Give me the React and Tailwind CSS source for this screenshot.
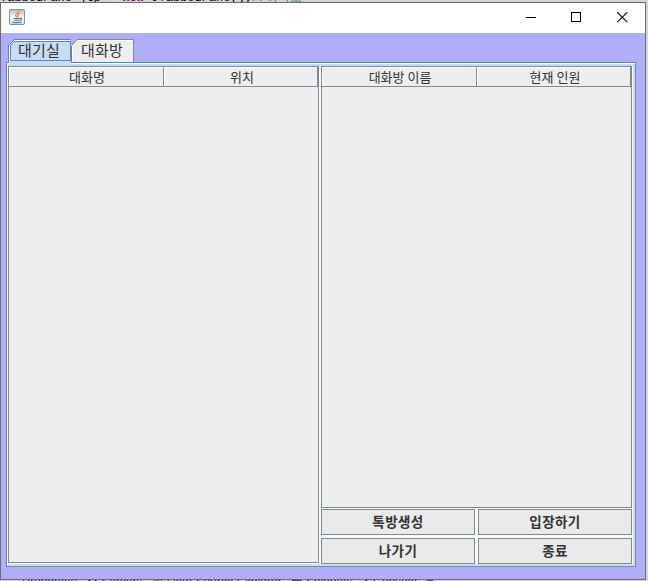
import React from "react";

const KR = "font-['Noto_Sans_CJK_KR',sans-serif]";

function JavaIcon() {
  return (
    <svg width="16" height="16" viewBox="0 0 16 16" className="block">
      <defs>
        <linearGradient id="plate" x1="0" y1="0" x2="0" y2="1">
          <stop offset="0" stopColor="#a9bccb" />
          <stop offset="0.5" stopColor="#f4f7fa" />
          <stop offset="1" stopColor="#d5dfe8" />
        </linearGradient>
      </defs>
      <rect x="0.5" y="0.5" width="15" height="15" rx="1" fill="url(#plate)" stroke="#7c93a8" />
      <path d="M9.7 2 C9.8 4 6 4.6 6.6 6.5 C6.8 7.3 7.6 7.7 7.6 8.4 M10.8 4.6 C8.8 5.2 8.4 6 9.1 7 C9.4 7.5 9 8 8.7 8.3" fill="none" stroke="#ed8b32" strokeWidth="1.4" />
      <path d="M4.5 9.5 H10.5 M5.2 11.2 H10 M10.8 9.2 C13.8 8.7 12.8 11 10.5 11.4 M3.2 12.9 C4.5 13.9 10.5 13.9 12.5 12.9" fill="none" stroke="#4b7698" strokeWidth="1.1" />
    </svg>
  );
}

function TitleBar() {
  return (
    <header className="flex h-[30px] shrink-0 items-start bg-white pl-2">
      <div className="pt-[6px]">
        <JavaIcon />
      </div>
      <div className="ml-auto flex h-[30px]">
        <button className="flex w-[46px] justify-center pt-[9px]">
          <svg width="11" height="11" shapeRendering="crispEdges"><path d="M1 5.5H11" stroke="#000" /></svg>
        </button>
        <button className="flex w-[46px] justify-center pt-[9px]">
          <svg width="11" height="11" shapeRendering="crispEdges"><rect x="0.5" y="0.5" width="9" height="9" fill="none" stroke="#000" /></svg>
        </button>
        <button className="flex w-[46px] justify-center pt-[9px]">
          <svg width="11" height="11"><path d="M0.3 0.3L10.2 10.2M10.2 0.3L0.3 10.2" stroke="#000" strokeWidth="1.1" /></svg>
        </button>
      </div>
    </header>
  );
}

function Tabs() {
  return (
    <nav className={`relative z-10 -mb-[1px] flex h-[24px] pl-[2px] text-[15px] leading-[22px] text-[#333] ${KR}`}>
      <button className="relative h-[24px] w-[63px]">
        <svg width="64" height="26" className="absolute left-0 top-0" shapeRendering="crispEdges">
          <path d="M1 26V6L6 1H63V26Z" fill="#c8ddf2" />
          <path d="M0.5 24V6.5L6.5 0.5H63" fill="none" stroke="#6382bf" />
          <path d="M1.5 24V6.5L6.5 1.5H62" fill="none" stroke="#fff" />
          <path d="M2.5 21.5V6.5L6.5 2.5H62.5V21.5Z" fill="none" stroke="#6382bf" />
        </svg>
        <span className="absolute left-[10px] top-0 whitespace-nowrap tracking-[0.2px]">대기실</span>
      </button>
      <button className="relative h-[24px] w-[63px]">
        <svg width="63" height="23" className="absolute left-0 top-0" shapeRendering="crispEdges">
          <path d="M0 23V6L6 0H63V23Z" fill="#eee" />
          <path d="M0.5 6.5L6.5 0.5H62.5V23" fill="none" stroke="#7a8a99" />
          <path d="M0.5 23V7" fill="none" stroke="#6382bf" />
          <path d="M1.5 23V6.5L6.5 1.5H62" fill="none" stroke="#fff" />
        </svg>
        <span className="absolute left-[10px] top-0 whitespace-nowrap tracking-[0.2px]">대화방</span>
      </button>
    </nav>
  );
}

function TablePane({ columns, className }) {
  return (
    <section className={`flex w-[311px] flex-col border border-[#7a8a99] bg-[#eee] ${className}`}>
      <div className={`flex h-[20px] shrink-0 border-b border-r border-[#7a8a99] text-[13px] leading-[17px] text-[#333] ${KR}`}>
        <div className="w-[155px] border-l border-r border-t border-l-white border-r-[#7a8a99] border-t-white pl-[1px] text-center">{columns[0]}</div>
        <div className="flex-1 border-l border-t border-white pl-[2px] text-center">{columns[1]}</div>
      </div>
      <div className="flex-1" />
    </section>
  );
}

function ActionButton({ children }) {
  return (
    <button className={`h-[26px] w-[154px] border border-[#7a8a99] bg-[#eaeaea] text-center text-[13.5px] font-bold leading-[22px] tracking-[0.4px] text-[#333] ${KR}`}>
      <span className="relative -top-px">{children}</span>
    </button>
  );
}

export default function App() {
  return (
    <div className="flex h-[581px] w-[648px] flex-col overflow-hidden bg-[#d5d5d5]">
      <div className="h-[2px] shrink-0 overflow-hidden whitespace-pre font-['Liberation_Mono',monospace] text-[12px] leading-[12px]">
        <div className="-mt-[8px]">TabbedPane jtp = <b className="text-[#7f0055]">new</b> JTabbedPane();<span className="text-[#3f7f5f]">//하나로</span></div>
      </div>
      <div className="flex h-[578px] w-[646px] shrink-0 flex-col border border-[#6d6d70] bg-[#b0adfa]">
        <TitleBar />
        <main className="flex flex-col pl-[5px] pt-[6px]">
          <Tabs />
          <div className="flex h-[505px] w-[630px] flex-col border border-b-[#7a8a99] border-l-[#6382bf] border-r-[#7a8a99] border-t-[#6382bf] bg-[#c8ddf2]">
            <div className="flex h-[503px] border-l border-t border-white pb-[2px] pt-[2px]">
              <div className="flex h-[498px] w-[625px] gap-[2px] bg-[#fafafa]">
                <TablePane columns={["대화명", "위치"]} className="h-[497px]" />
                <div className="flex flex-col">
                  <TablePane columns={["대화방 이름", "현재 인원"]} className="h-[442px]" />
                  <div className="mt-[1px] grid grid-cols-[154px_154px] gap-[3px]">
                    <ActionButton>톡방생성</ActionButton>
                    <ActionButton>입장하기</ActionButton>
                    <ActionButton>나가기</ActionButton>
                    <ActionButton>종료</ActionButton>
                  </div>
                </div>
              </div>
            </div>
          </div>
        </main>
      </div>
      <div className="h-[1px] shrink-0 overflow-hidden whitespace-pre pl-[22px] font-['Liberation_Sans',sans-serif] text-[12px] leading-[12px] text-[#222]">
        <div className="-mt-[4px]">Properties   ⚙ Servers   <span className="text-[#789b10]">▦</span> Data Source Explorer   ▤ Snippets   ● Console  ⌘</div>
      </div>
    </div>
  );
}
